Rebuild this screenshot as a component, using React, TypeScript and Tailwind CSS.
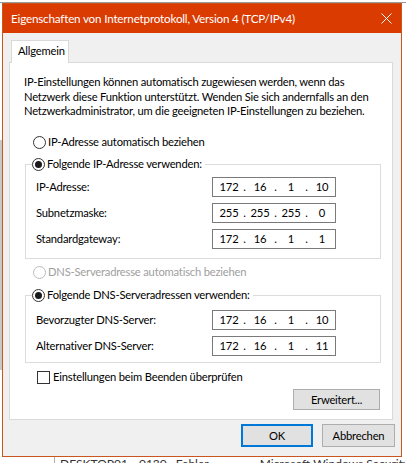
import { ReactNode } from "react"

const font = "font-['Lato',sans-serif]"

function Radio({ checked, disabled, label }: { checked?: boolean; disabled?: boolean; label: string }) {
  return (
    <div className={`flex items-center h-[16px] ${disabled ? "text-[#a0a0a0]" : "text-black"}`}>
      <span
        className={`flex items-center justify-center w-[13px] h-[13px] rounded-full border bg-white ${
          disabled ? "border-[#bcbcbc]" : "border-[#333333]"
        }`}
      >
        {checked && <span className="w-[7px] h-[7px] rounded-full bg-[#1b1b1b]" />}
      </span>
      <span className="ml-[2px] leading-none whitespace-nowrap">{label}</span>
    </div>
  )
}

function IpBox({ parts }: { parts: string[] }) {
  return (
    <div className="flex items-center w-[124px] h-[20px] border border-[#7a7a7a] bg-white pl-[5px]">
      {parts.map((p, i) => (
        <div key={i} className="flex items-center">
          <span className="w-[22px] text-center leading-none">{p}</span>
          {i < 3 && <span className="w-[9px] text-center leading-none">.</span>}
        </div>
      ))}
    </div>
  )
}

function Row({ label, parts }: { label: string; parts: string[] }) {
  return (
    <div className="flex items-center h-[20px]">
      <span className="w-[176px] leading-none whitespace-nowrap">{label}</span>
      <IpBox parts={parts} />
    </div>
  )
}

function Group({ legend, children, pb }: { legend: ReactNode; children: ReactNode; pb: string }) {
  return (
    <fieldset className={`ml-[15px] w-[356px] border border-[#dcdcdc] ${pb}`}>
      <legend className="ml-[6px] pr-[3px] bg-white">{legend}</legend>
      <div className="pl-[10px]">{children}</div>
    </fieldset>
  )
}

export default function App() {
  return (
    <div className={`relative w-[406px] h-[463px] overflow-hidden bg-white text-[11.2px] tracking-[-0.2px] ${font}`}>
      {/* desktop behind the dialog */}
      <div className="absolute left-0 top-0 w-[406px] h-[3px] border-b border-[#9a9a9a]" />
      <div className="absolute left-0 top-[140px] w-[2px] h-[230px] bg-[#c9c9c9]" />
      <div className="absolute left-0 top-[448px] w-[406px] h-[15px] flex text-[12px] tracking-normal text-[#333] leading-none whitespace-nowrap">
        <span className="shrink-0 w-[55px] h-full border-r border-[#b0b0b0]" />
        <span className="shrink-0 ml-[5px] mt-[10px]">DESKTOP01</span>
        <span className="shrink-0 ml-[11px] mt-[10px]">0130</span>
        <span className="shrink-0 ml-[9px] mt-[10px]">Fehler</span>
        <span className="shrink-0 ml-[51px] mt-[10px]">Microsoft Windows Security</span>
      </div>

      {/* dialog window */}
      <div className="absolute left-[2px] top-[3px] w-[400px] h-[454px] border border-[#c9561f] bg-[#f0f0f0] flex flex-col">
        <div className="flex items-center h-[29px] bg-[#da3b01] text-white pl-[8px] pr-[9px]">
          <span className="flex-1 leading-none text-[11.7px]">Eigenschaften von Internetprotokoll, Version 4 (TCP/IPv4)</span>
          <svg width="11" height="11" viewBox="0 0 11 11" className="mb-[1px]">
            <path d="M0.5 0.5 L10.5 10.5 M10.5 0.5 L0.5 10.5" stroke="white" strokeWidth="1" />
          </svg>
        </div>

        <div className="pt-[7px]">
          <div className="relative z-10 ml-[8px] mb-[-1px] w-[58px] h-[23px] border-l border-t border-r border-[#d9d9d9] bg-white flex items-center pl-[6px] pb-[1px]">
            Allgemein
          </div>
          <div className="ml-[6px] w-[384px] h-[358px] border border-[#d9d9d9] bg-white flex flex-col">
            <div className="pl-[14px] pt-[12px] h-[56px] leading-[14.5px] text-black whitespace-nowrap">
              IP-Einstellungen können automatisch zugewiesen werden, wenn das
              <br />
              Netzwerk diese Funktion unterstützt. Wenden Sie sich andernfalls an den
              <br />
              Netzwerkadministrator, um die geeigneten IP-Einstellungen zu beziehen.
            </div>

            <div className="mt-[15px] pl-[23px]">
              <Radio label="IP-Adresse automatisch beziehen" />
            </div>

            <div className="mt-[6px]">
              <Group legend={<Radio checked label="Folgende IP-Adresse verwenden:" />} pb="pb-[9px]">
                <div className="mt-[5px] flex flex-col gap-[6px]">
                  <Row label="IP-Adresse:" parts={["172", "16", "1", "10"]} />
                  <Row label="Subnetzmaske:" parts={["255", "255", "255", "0"]} />
                  <Row label="Standardgateway:" parts={["172", "16", "1", "1"]} />
                </div>
              </Group>
            </div>

            <div className="mt-[5px] pl-[23px]">
              <Radio disabled label="DNS-Serveradresse automatisch beziehen" />
            </div>

            <div className="mt-[7px]">
              <Group legend={<Radio checked label="Folgende DNS-Serveradressen verwenden:" />} pb="pb-[6px]">
                <div className="mt-[7px] flex flex-col gap-[6px]">
                  <Row label="Bevorzugter DNS-Server:" parts={["172", "16", "1", "10"]} />
                  <Row label="Alternativer DNS-Server:" parts={["172", "16", "1", "11"]} />
                </div>
              </Group>
            </div>

            <div className="mt-[6px] pl-[27px] flex items-center h-[16px]">
              <span className="w-[13px] h-[13px] border border-[#333333] bg-white" />
              <span className="ml-[3px] leading-none">Einstellungen beim Beenden überprüfen</span>
            </div>

            <div className="mt-[4px] flex justify-end pr-[12px]">
              <button className="w-[87px] h-[21px] bg-[#e1e1e1] border border-[#adadad] leading-none">Erweitert...</button>
            </div>
          </div>

          <div className="mt-[4px] flex justify-end gap-[9px] pr-[6px]">
            <button className="w-[72px] h-[23px] bg-[#e1e1e1] border-2 border-[#0078d7] leading-none">OK</button>
            <button className="w-[73px] h-[23px] bg-[#e1e1e1] border border-[#adadad] leading-none">Abbrechen</button>
          </div>
        </div>
      </div>
    </div>
  )
}
